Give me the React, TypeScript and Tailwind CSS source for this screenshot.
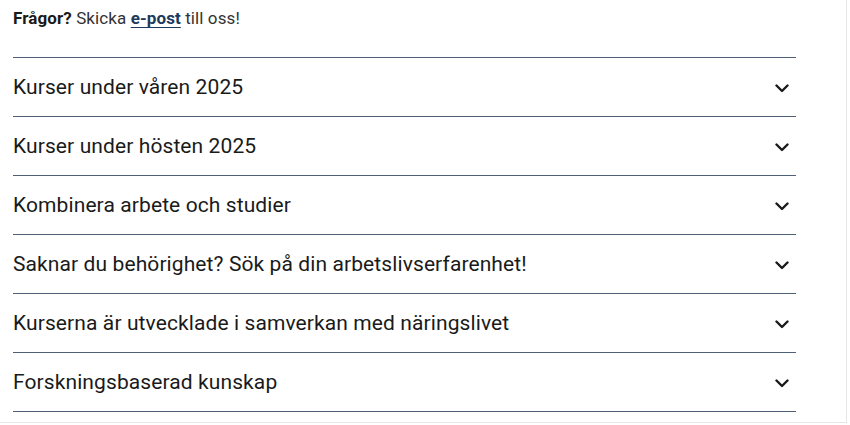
import React from "react";

const items = [
  "Kurser under våren 2025",
  "Kurser under hösten 2025",
  "Kombinera arbete och studier",
  "Saknar du behörighet? Sök på din arbetslivserfarenhet!",
  "Kurserna är utvecklade i samverkan med näringslivet",
  "Forskningsbaserad kunskap",
];

function Chevron() {
  return (
    <svg width="14" height="9" viewBox="0 0 14 9" fill="none">
      <path d="M1.5 1.5 L7 7 L12.5 1.5" stroke="#1a1a1a" strokeWidth="2.4" strokeLinecap="round" strokeLinejoin="round" />
    </svg>
  );
}

export default function App() {
  return (
    <div className="w-[850px] h-[425px] bg-white" style={{ fontFamily: "Roboto, 'Noto Sans', sans-serif" }}>
      <div className="w-[847px] h-[423px] border-r border-b border-[#e6e6e6] pl-[13px] pr-[50px] pt-[7px]">
        <p className="text-[17px] leading-[22px] text-[#333] tracking-[0.1px]">
          <span className="font-bold text-[#1a1a1a]">Frågor?</span> Skicka{" "}
          <a className="font-bold text-[#1d3a5c] underline underline-offset-[3px] decoration-[#1d3a5c]">e-post</a> till oss!
        </p>
        <div className="mt-[28px] border-t border-[#4f5f78]">
          {items.map((t) => (
            <div key={t} className="h-[59px] flex items-center justify-between border-b border-[#4f5f78] pr-[7px] pt-[2px]">
              <span className="text-[21px] text-[#1a1a1a] tracking-[0.1px]">{t}</span>
              <Chevron />
            </div>
          ))}
        </div>
      </div>
    </div>
  );
}
